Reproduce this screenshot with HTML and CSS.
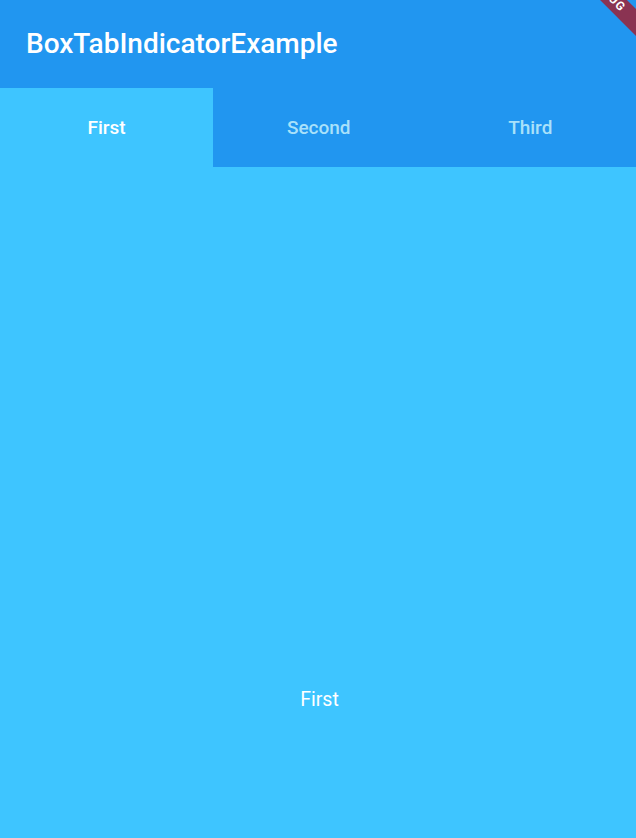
FILE: index.html
```html
<!DOCTYPE html>
<html>
<head>
<meta charset="utf-8">
<link rel="stylesheet" href="styles.css">
</head>
<body>
<div class="app">
  <header class="appbar">
    <h1 class="title">BoxTabIndicatorExample</h1>
  </header>
  <nav class="tabs">
    <div class="tab active">First</div>
    <div class="tab">Second</div>
    <div class="tab">Third</div>
  </nav>
  <main class="content">
    <div class="label">First</div>
  </main>
  <div class="banner"><span>DEBUG</span></div>
</div>
</body>
</html>
```

FILE: styles.css
```css
html, body {
  margin: 0;
  padding: 0;
}
body {
  width: 636px;
  height: 838px;
  overflow: hidden;
  font-family: Roboto, "Liberation Sans", sans-serif;
}
.app {
  position: relative;
  width: 636px;
  height: 838px;
  display: flex;
  flex-direction: column;
  overflow: hidden;
  background: #3ec5ff;
}
.appbar {
  height: 88px;
  background: #2196f0;
  display: flex;
  align-items: center;
  padding-left: 26px;
  box-sizing: border-box;
}
.title {
  margin: 0;
  color: #ffffff;
  font-size: 28px;
  font-weight: 500;
  line-height: 34px;
}
.tabs {
  height: 79px;
  background: #2196f0;
  display: grid;
  grid-template-columns: 213px 1fr 1fr;
}
.tab {
  display: flex;
  align-items: center;
  justify-content: center;
  font-size: 19px;
  font-weight: 500;
  color: #a9e1fa;
}
.tab.active {
  background: #3ec5ff;
  color: #ffffff;
}
.content {
  flex: 1;
  display: flex;
  justify-content: center;
  padding-top: 521px;
  padding-left: 3px;
  box-sizing: border-box;
}
.label {
  color: #ffffff;
  font-size: 19.5px;
  line-height: 24px;
  height: 24px;
}
.banner {
  position: absolute;
  left: 508px;
  top: -15px;
  width: 200px;
  height: 19px;
  background: #8a3352;
  transform: rotate(45deg);
  display: flex;
  align-items: center;
  justify-content: center;
}
.banner span {
  color: #ffffff;
  font-weight: 700;
  font-size: 12px;
  letter-spacing: 1px;
  line-height: 19px;
}
```
